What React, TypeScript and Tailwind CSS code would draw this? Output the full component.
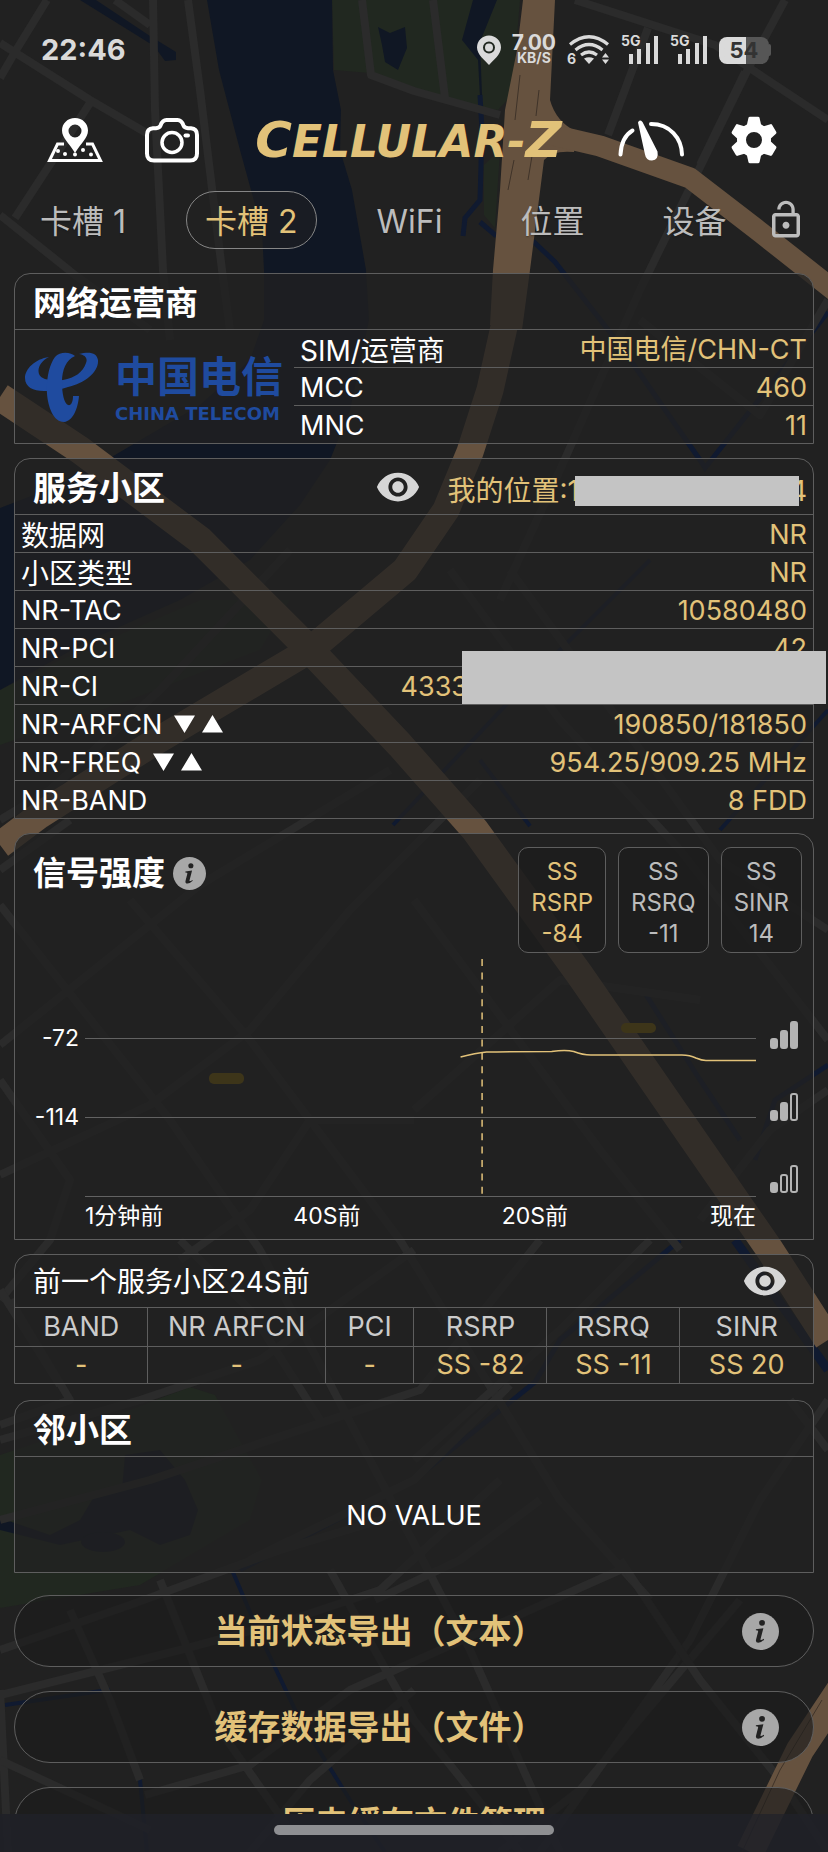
import React from 'react';
import { MdLockOpen, MdVisibility } from 'react-icons/md';

const GOLD = 'text-[#e2c279]';

const tabs = ['卡槽 1', '卡槽 2', 'WiFi', '位置', '设备'];

const operatorRows = [
  { label: 'SIM/运营商', value: '中国电信/CHN-CT' },
  { label: 'MCC', value: '460' },
  { label: 'MNC', value: '11' },
];

const cellRows = [
  { label: '数据网', value: 'NR' },
  { label: '小区类型', value: 'NR' },
  { label: 'NR-TAC', value: '10580480' },
  { label: 'NR-PCI', value: '42' },
  { label: 'NR-CI', value: '4333', masked: true },
  { label: 'NR-ARFCN', value: '190850/181850', arrows: true },
  { label: 'NR-FREQ', value: '954.25/909.25 MHz', arrows: true },
  { label: 'NR-BAND', value: '8 FDD' },
];

const metrics = [
  { name: 'RSRP', value: '-84', active: true },
  { name: 'RSRQ', value: '-11', active: false },
  { name: 'SINR', value: '14', active: false },
];

const previousCell = [
  { name: 'BAND', value: '-', width: 'w-3/18' },
  { name: 'NR ARFCN', value: '-', width: 'w-4/18' },
  { name: 'PCI', value: '-', width: 'w-2/18' },
  { name: 'RSRP', value: 'SS -82', width: 'w-3/18' },
  { name: 'RSRQ', value: 'SS -11', width: 'w-3/18' },
  { name: 'SINR', value: 'SS 20', width: 'w-3/18' },
];

const MapBackground = () => (
  <svg
    className="absolute inset-0 h-full w-full"
    viewBox="0 0 828 1852"
    preserveAspectRatio="xMidYMin slice"
    aria-hidden="true"
  >
    <rect width="828" height="1852" fill="#212121" />
    {/* parks */}
    <g fill="#212820">
      <path d="M332 0H520L512 95L498 110L440 100L414 90L370 73L334 70Z" />
      <path d="M484 165L500 150L495 228L484 215Z" />
      <path d="M0 690L60 660L200 600L290 600L260 650L130 700L0 745Z" />
      <path d="M0 1455L90 1425L190 1387L215 1395L262 1480L250 1520L140 1585L0 1608Z" />
    </g>
    {/* water */}
    <g fill="#101724">
      <path d="M207 0H332L333 70L341 110L340 150L352 190L366 270L369 320L350 410L330 460L300 505L250 560L180 600L90 640L0 690V508L60 485L115 455L200 405L250 360L264 320L264 270L262 230L240 150L219 70Z" />
      <path d="M378 27L390 33L405 27L407 48L398 70L385 62L382 45Z" />
      <path d="M473 0H497L480 42L482 95L480 97L478 60L462 40Z" />
      <path d="M125 1455L160 1450L185 1480L198 1510L190 1535L160 1545L130 1530L60 1545L20 1535L0 1530V1518L50 1535L80 1520L95 1495L122 1490Z" />
      <ellipse cx="103" cy="1542" rx="22" ry="10" />
      <path d="M80 0H96L150 36L176 52L176 60L165 61L154 46Z" />
    </g>
    <g fill="none" stroke="#101a30" strokeWidth="6">
      <path d="M480 95L482 130L480 200L465 218L463 236M480 222L495 235L534 242L555 262L620 345L700 460L705 468L828 312" strokeWidth="5" />
      <path d="M393 825L520 690L650 560M530 826L480 760M720 830L828 710" strokeWidth="4" />
      <path d="M643 990L700 1080L740 1140M828 1065L775 1100L755 1160M680 1240L560 1340L535 1382L414 1480L240 1570" strokeWidth="5" />
      <path d="M735 1240L828 1370" strokeWidth="9" />
      <path d="M232 1570L262 1640L300 1720L350 1800L385 1852M5 1705L108 1690L140 1780L147 1852" strokeWidth="4" />
    </g>
    {/* streets */}
    <g fill="none" stroke="#2b2b2b" strokeWidth="8" strokeLinejoin="round">
      <path d="M47 0L15 52L0 78M0 43L90 100L150 135M90 103L15 218M0 215L75 275L150 330M153 0L155 110L163 270L170 340M188 0L200 90L222 270L230 330M115 0L150 25" />
      <path d="M362 0L371 75L414 91L500 115M433 0L445 98M575 0L715 45L828 120M785 0L750 65L640 290L560 470L500 600M648 28L608 135M745 72L700 165" />
      <path d="M640 320L760 415L828 300M450 570L560 720L680 850L828 1040M510 570L720 860L828 930M0 820L50 790L160 690L290 550" />
      <path d="M0 905L75 1000L170 1120L260 1250L370 1460L470 1650L560 1852M0 1045L150 925L200 885L390 770M130 900L250 1040L400 1240L560 1500L650 1600M0 1175L150 1105L250 1030L350 910L480 780M70 820L0 870" />
      <path d="M0 1080L70 1180L50 1240L0 1300M180 1240L250 1310L320 1420M414 1120L310 1120L250 1210L180 1260M414 900L600 1150L680 1250M414 1110L560 980L700 1000M540 1240L420 1390L150 1480L0 1520" />
      <path d="M0 1440L140 1400L260 1360L414 1250M0 1425L70 1400L10 1300M60 1385L0 1290M510 1385L414 1480L250 1560M740 1600L580 1790L500 1852M650 1240L560 1330L414 1460M828 1400L760 1500L690 1640L540 1852" />
      <path d="M0 1650L130 1605L280 1550L414 1510M70 1610L110 1700L140 1780M160 1580L220 1730L290 1830M0 1695L180 1650L290 1620L380 1590L500 1480M375 1600L460 1560L540 1500M330 1570L414 1720L520 1852M145 1795L250 1765L350 1690L620 1570M620 1560L700 1680L780 1780L828 1852M0 1690L8 1852M250 1852L310 1780L414 1690" />
      <path d="M828 1090L770 1130L700 1220M828 1450L790 1400M150 1830L0 1760" />
    </g>
    {/* expressways */}
    <g fill="none" stroke="#66523f" strokeLinejoin="round">
      <path d="M523 0H555L550 100Q556 122 577 132L574 152Q552 150 544 160L530 270L522 330L490 325L493 270L500 190L505 110L517 50Z" fill="#66523f" stroke="none" />
      <path d="M506 318L490 390L470 452L446 510L405 570L310 650L150 745L40 815L0 845" strokeWidth="27" />
      <path d="M0 397L80 450L200 540L310 650L400 745L475 830L580 975L680 1120L770 1250L828 1340" strokeWidth="28" />
      <path d="M540 132L600 146L690 178L760 232L840 295" strokeWidth="21" />
      <path d="M840 1690L800 1750L750 1852" strokeWidth="28" />
    </g>
    <g fill="none" stroke="#3f3329" strokeWidth="1">
      <path d="M520 75L515 120M539 90L536 116M514 160L508 190M533 150L528 180M822 1700L780 1770L742 1852" />
    </g>
    <g fill="#907000">
      <rect x="209" y="1073" width="35" height="11" rx="5" />
      <rect x="621" y="1023" width="35" height="10" rx="5" />
    </g>
  </svg>
);

const SignalBars = () => (
  <svg width="38" height="30" viewBox="0 0 38 30" fill="currentColor">
    <rect x="8" y="19" width="4" height="10" />
    <rect x="16" y="14" width="4" height="15" />
    <rect x="25" y="8" width="4" height="21" />
    <rect x="33" y="1" width="4" height="28" />
  </svg>
);

const StatusBar = () => (
  <div className="flex h-[100px] items-center justify-between pl-[41px] pr-[57px] text-[#dadada]">
    <span className="text-[29px] font-bold">22:46</span>
    <div className="flex items-center gap-[11px]">
      <svg width="24" height="30" viewBox="0 0 24 30" fill="currentColor" fillRule="evenodd">
        <path d="M12 0.500a12 12 0 0 1 12 12c0 7-8 13-12 17.500c-4-4.500-12-10.500-12-17.500a12 12 0 0 1 12-12ZM12 6.500a6 6 0 1 0 0 12a6 6 0 0 0 0-12ZM12 8.500a4 4 0 1 1 0 8a4 4 0 0 1 0-8Z" />
      </svg>
      <div className="flex flex-col items-center">
        <span className="text-[21px] font-bold leading-4">7.00</span>
        <span className="text-[14px] font-bold leading-[14px]">KB/S</span>
      </div>
      <div className="relative">
        <svg width="43" height="30" viewBox="0 0 43 30" fill="none" stroke="currentColor" strokeWidth="3.200">
          <path d="M3 9.500Q22 -6 41 9.500M8.500 15Q22 4 35.500 15M14 20Q22 14 30 20" />
          <path d="M17 23.500Q22 21 27 23.500L22 29Z" fill="currentColor" stroke="none" />
          <path d="M35 22.500L38.500 18L42 22.500ZM35 24.500L38.500 29L42 24.500Z" fill="currentColor" stroke="none" />
        </svg>
        <span className="absolute bottom-0 left-0 text-[14px] font-bold leading-3">6</span>
      </div>
      {[0, 1].map((sim) => (
        <div key={sim} className="relative">
          <SignalBars />
          <span className="absolute left-0 top-0 text-[14px] font-bold leading-3">5G</span>
        </div>
      ))}
      <div className="flex items-center">
        <div className="flex h-[27px] w-[50px] items-center justify-center rounded-lg bg-gradient-to-r from-[#dadada] from-55% to-[#565656] to-55% text-[22px] font-bold text-[#333333]">
          54
        </div>
        <div className="h-3 w-0.5 rounded-r bg-[#565656]" />
      </div>
    </div>
  </div>
);

const MapPinIcon = () => (
  <svg width="56" height="46" viewBox="0 0 56 46" fill="none">
    <path d="M17 27H10.500L2.500 43.500H53.500L45.500 27H39" stroke="#fff" strokeWidth="3" />
    <path
      d="M28 1C20.500 1 15 6.500 15 13.500C15 21 22 26 28 36C34 26 41 21 41 13.500C41 6.500 35.500 1 28 1ZM28 7.500a6.500 6.500 0 1 1 0 13a6.500 6.500 0 0 1 0-13Z"
      fill="#fff"
      fillRule="evenodd"
    />
    <g fill="#fff">
      <circle cx="11" cy="34" r="2" />
      <circle cx="18" cy="37" r="2" />
      <circle cx="28" cy="37.500" r="2" />
      <circle cx="36" cy="33" r="2" />
      <circle cx="44" cy="37.500" r="2" />
    </g>
  </svg>
);

const CameraIcon = () => (
  <svg width="54" height="46" viewBox="0 0 54 46" fill="none" stroke="#fff" strokeWidth="4">
    <path d="M9 43.500Q2 43.500 2 36.500V18Q2 11.500 8 11.200H11Q14.500 11 15.500 8.500Q17.500 3 21.500 3H32.500Q36.500 3 38.500 8.500Q39.500 11 43 11.200H46Q52 11.500 52 18V36.500Q52 43.500 45 43.500Z" />
    <circle cx="27" cy="25.500" r="10" strokeWidth="3.500" />
    <path d="M40.500 18.500H43" strokeLinecap="round" />
  </svg>
);

const SpeedIcon = () => (
  <svg width="67" height="42" viewBox="0 0 67 42" fill="none">
    <path d="M2.500 35.500C3 25 7 16 14.500 11.500M33 5C52 5 63.500 19 64 35.500" stroke="#fff" strokeWidth="4" strokeLinecap="round" />
    <path d="M20 3.500Q21.500 0 24.500 3L39.500 32.500Q41 41 34 41.500Q28 41.500 27 35.500Z" fill="#fff" />
  </svg>
);

const GearIcon = () => (
  <svg width="48" height="48" viewBox="0 0 48 48" fill="#fff">
    <circle cx="24" cy="24" r="12.500" fill="none" stroke="#fff" strokeWidth="9" />
    {[0, 60, 120, 180, 240, 300].map((angle) => (
      <path key={angle} d="M16.500 10.500L18.500 1.800Q18.800 0.700 20 0.700H28Q29.200 0.700 29.500 1.800L31.500 10.500Z" transform={`rotate(${angle} 24 24)`} />
    ))}
  </svg>
);

const InfoIcon = ({ size }: { size: number }) => (
  <svg width={size} height={size} viewBox="0 0 36 36">
    <circle cx="18" cy="18" r="18" fill="#a8a8a8" />
    <circle cx="19.500" cy="9.500" r="2.800" fill="#222" />
    <path d="M13.500 15.800L20.800 14.800L18 25.500Q17.600 27.300 21.200 25L21.500 26Q18.500 29 15.800 29Q12.900 28.800 13.700 25.800L15.700 18Q16 16.800 13.500 16.800Z" fill="#222" />
  </svg>
);

const Header = () => (
  <header className="flex h-20 items-center justify-between pl-[47px] pr-[50px]">
    <div className="flex gap-[42px]">
      <button aria-label="地图"><MapPinIcon /></button>
      <button aria-label="拍照"><CameraIcon /></button>
    </div>
    <h1 className={`font-['DejaVu_Sans',sans-serif] text-[50px] font-bold italic leading-none ${GOLD}`}>
      C<span className="text-[44px]">ELLULAR-</span>Z
    </h1>
    <div className="flex items-center gap-[45px]">
      <button aria-label="测速"><SpeedIcon /></button>
      <button aria-label="设置"><GearIcon /></button>
    </div>
  </header>
);

const TabBar = () => (
  <nav className="flex h-20 items-center justify-between pl-[22px] pr-[21px] text-[32px] text-[#bcbcbc]">
    <div className="flex gap-[42px]">
      {tabs.map((tab, i) => (
        <button
          key={tab}
          className={
            i === 1
              ? `h-[58px] rounded-full border border-[#868686] bg-[#222222]/50 px-[18px] pt-1 whitespace-nowrap ${GOLD}`
              : 'h-[58px] px-[18px] pt-1 whitespace-nowrap text-shadow-sm'
          }
        >
          {tab}
        </button>
      ))}
    </div>
    <button aria-label="锁定"><MdLockOpen size={42} /></button>
  </nav>
);

const Panel = ({ children }: { children: React.ReactNode }) => (
  <section className="rounded-t-2xl border border-[#5e5e5e] bg-[#222222]/75">{children}</section>
);

const Title = ({ children }: { children: React.ReactNode }) => (
  <h2 className="text-[33px] font-bold text-white">{children}</h2>
);

const OperatorLogo = () => (
  <div className="flex w-[279px] shrink-0 items-center gap-4 pl-2.5 text-[#1f4b9f]">
    <svg width="74" height="70" viewBox="0 0 74 70" fill="currentColor">
      <path d="M24 5C10 7 0 17 0 26C0 35 8 39 19 39C29 39 37 37 43 35C60 31 74 20 73 8C72 1 65 -1 54 2C60 3 63 6 61 11C58 20 50 26 38 28C27 29 16 28 14 22C12 16 16 9 24 5Z" />
      <path d="M50 4C46 0 35 -1 30 5C24 13 21 28 22 42C23 54 28 70 39 70C48 69 53 56 54 44L48 44C48 50 46 54 43 53C39 51 37 42 37 30C37 18 41 8 50 4Z" />
    </svg>
    <div className="flex flex-col gap-1">
      <span className="text-[42px] font-bold leading-[50px]">中国电信</span>
      <span className="font-['DejaVu_Sans',sans-serif] text-[18px] font-bold leading-4 whitespace-nowrap">CHINA TELECOM</span>
    </div>
  </div>
);

const Arrows = () => (
  <svg className="mb-1 ml-3" width="50" height="18" viewBox="0 0 50 18" fill="#fff">
    <path d="M0 0.500H21L10.500 18ZM28 17.500H49L38.500 0Z" />
  </svg>
);

const Row = ({ label, value, arrows, masked }: { label: string; value: string; arrows?: boolean; masked?: boolean }) => (
  <div className="flex h-[38px] items-center border-b border-[#5e5e5e] px-1.5 pt-1 last:h-[37px] last:border-b-0">
    <dt className={/\p{Script=Han}/u.test(label) ? 'text-[28px]' : 'flex items-center'}>
      {label}
      {arrows && <Arrows />}
    </dt>
    <dd className={`ml-auto ${GOLD}`}>{value}</dd>
    {masked && <div className="relative -ml-1.5 -mr-[19px] h-[53px] w-[364px] shrink-0 self-end bg-[#c4c4c4]" />}
  </div>
);

const LevelIcon = ({ level }: { level: number }) => (
  <svg width="28" height="28" viewBox="0 0 28 28" fill="none" stroke="#b4b4b4" strokeWidth="2">
    {[{ x: 1, y: 18, h: 9 }, { x: 11, y: 10, h: 17 }, { x: 21, y: 1, h: 26 }].map((bar, i) => (
      <rect key={bar.x} x={bar.x} y={bar.y} width="6" height={bar.h} rx="2" fill={i < level ? '#b4b4b4' : 'none'} />
    ))}
  </svg>
);

const SignalChart = () => (
  <div className="mt-1.5 pb-1.5 text-white">
    <div className="flex h-[238px]">
      <div className="flex w-[70px] shrink-0 flex-col items-end gap-[49px] pr-1.5 pt-[64px] text-[23px] leading-[30px]">
        <span>-72</span>
        <span>-114</span>
      </div>
      <svg className="h-full min-w-0 flex-1" viewBox="0 0 670 238" preserveAspectRatio="none" fill="none">
        <path d="M0 79.500H670M0 158.500H670M0 237.500H670" stroke="#626262" />
        <path d="M396.500 0V236" stroke="#e2c279" strokeDasharray="7 6.400" strokeWidth="1.500" />
        <path d="M375 98Q390 94 401 93Q420 92.500 466 92.500Q480 90.500 488 92.500Q497 96 505 96H596Q604 96 610 99Q616 101.500 620 101.500H670" stroke="#e2c279" strokeWidth="1.500" />
      </svg>
      <div className="flex w-[57px] shrink-0 flex-col gap-[44px] pl-[14px] pt-[62px]">
        <LevelIcon level={3} />
        <LevelIcon level={2} />
        <LevelIcon level={1} />
      </div>
    </div>
    <div className="grid grid-cols-[1fr_1fr_1fr_auto] pl-[70px] pr-[57px] pt-0.5 text-[23px] leading-[34px]">
      <span>1分钟前</span>
      <span>40S前</span>
      <span>20S前</span>
      <span>现在</span>
    </div>
  </div>
);

const ExportButton = ({ text, info }: { text: string; info?: boolean }) => (
  <button className="flex h-[72px] w-full shrink-0 items-center rounded-full border border-[#5e5e5e] bg-[#1b1b1b]/65 px-[34px]">
    <span className={`flex-1 pt-0.5 text-center text-[33px] font-bold ${GOLD}`}>{text}</span>
    {info && <span className="ml-8"><InfoIcon size={37} /></span>}
  </button>
);

export default function App() {
  return (
    <div className="relative flex h-screen flex-col overflow-hidden bg-[#212121] font-['Inter','Noto_Sans_CJK_SC',sans-serif]">
      <MapBackground />
      <div className="relative flex min-h-0 flex-1 flex-col">
        <StatusBar />
        <Header />
        <TabBar />

        <main className="flex min-h-0 flex-1 flex-col gap-3.5 overflow-hidden px-3.5 pt-[13px] text-[27px] text-white">
          <Panel>
            <div className="flex h-14 items-center border-b border-[#5e5e5e] px-[18px] pt-1">
              <Title>网络运营商</Title>
            </div>
            <div className="flex">
              <OperatorLogo />
              <dl className="flex-1">
                {operatorRows.map((row) => <Row key={row.label} {...row} />)}
              </dl>
            </div>
          </Panel>

          <Panel>
            <div className="flex h-14 items-center border-b border-[#5e5e5e] pl-[18px] pr-1.5 pt-1">
              <Title>服务小区</Title>
              <button aria-label="显示位置" className="mb-1 ml-auto text-[#d6d6d6]"><MdVisibility size={46} /></button>
              <div className={`ml-[26px] mt-1 flex items-center text-[28px] ${GOLD}`}>
                <span>我的位置:1</span>
                <span className="relative z-10 -ml-1 h-[30px] w-[224px] bg-[#c4c4c4]" />
                <span className="-ml-2.5">4</span>
              </div>
            </div>
            <dl>
              {cellRows.map((row) => <Row key={row.label} {...row} />)}
            </dl>
          </Panel>

          <Panel>
            <div className="flex items-start justify-between pl-[18px] pr-[11px] pt-[13px]">
              <div className="flex items-center gap-2 pt-0.5">
                <Title>信号强度</Title>
                <button aria-label="信号强度说明"><InfoIcon size={33} /></button>
              </div>
              <div className="flex gap-3">
                {metrics.map((metric) => (
                  <button
                    key={metric.name}
                    className={`flex h-[106px] flex-col items-center justify-center rounded-[10px] border border-[#5e5e5e] bg-[#1b1b1b]/65 px-3 pt-1 text-[24px] leading-[31px] ${metric.active ? GOLD : 'text-[#bcbcbc]'}`}
                  >
                    <span>SS</span>
                    <span>{metric.name}</span>
                    <span>{metric.value}</span>
                  </button>
                ))}
              </div>
            </div>
            <SignalChart />
          </Panel>

          <Panel>
            <div className="flex h-[53px] items-center justify-between border-b border-[#5e5e5e] pl-[18px] pr-[25px]">
              <h2 className="pt-0.5 text-[28px]">前一个服务小区24S前</h2>
              <button aria-label="显示小区" className="text-[#d6d6d6]"><MdVisibility size={46} /></button>
            </div>
            <table className="w-full table-fixed text-center">
              <thead>
                <tr className="h-[38px] text-[#cbcbcb]">
                  {previousCell.map((col) => (
                    <th key={col.name} className={`${col.width} border-r border-b border-[#5e5e5e] font-normal leading-9 last:border-r-0`}>{col.name}</th>
                  ))}
                </tr>
              </thead>
              <tbody>
                <tr className={`h-[37px] ${GOLD}`}>
                  {previousCell.map((col) => (
                    <td key={col.name} className="border-r border-[#5e5e5e] leading-9 last:border-r-0">{col.value}</td>
                  ))}
                </tr>
              </tbody>
            </table>
          </Panel>

          <div className="pt-0.5">
            <Panel>
              <div className="flex h-14 items-center border-b border-[#5e5e5e] px-[18px] pt-1">
                <Title>邻小区</Title>
              </div>
              <p className="flex h-[115px] items-center justify-center pt-1">NO VALUE</p>
            </Panel>
          </div>

          <div className="flex flex-col gap-6 pt-2">
            <ExportButton text="当前状态导出（文本）" info />
            <ExportButton text="缓存数据导出（文件）" info />
            <ExportButton text="历史缓存文件管理" />
          </div>
        </main>
      </div>

      <footer className="relative flex h-[38px] shrink-0 justify-center bg-[#1f2027]/90 pt-[11px]">
        <div className="h-2.5 w-[280px] rounded-full bg-[#8e8f92]" />
      </footer>
    </div>
  );
}
